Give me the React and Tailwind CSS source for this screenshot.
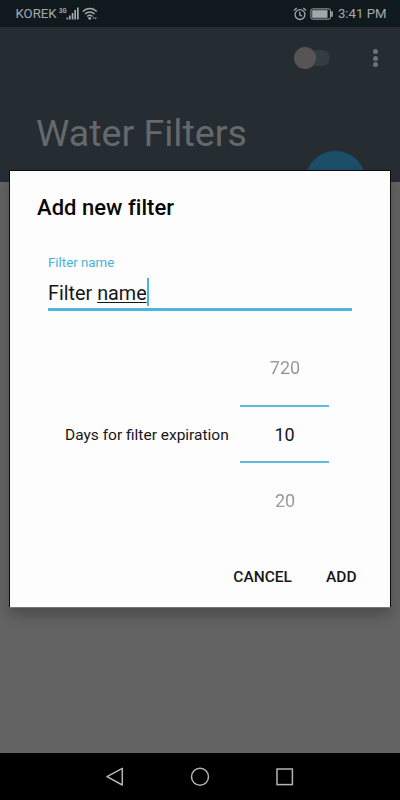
function SignalIcon() {
  return (
    <svg width="26" height="16" viewBox="0 0 26 16" className="ml-0.5 shrink-0" fill="#a3a9ab">
      <text x="0" y="6.6" fontSize="7.5" fontWeight="700" fontFamily="Roboto, sans-serif" textLength="7.5" lengthAdjust="spacingAndGlyphs">
        3G
      </text>
      <rect x="7.5" y="11.5" width="1.7" height="2" />
      <rect x="10" y="9.5" width="1.7" height="4" />
      <rect x="12.7" y="7" width="1.7" height="6.5" />
      <rect x="15.3" y="4" width="1.7" height="9.5" />
      <rect x="18" y="1.5" width="1.7" height="12" />
    </svg>
  );
}

function WifiIcon() {
  return (
    <svg width="16" height="14" viewBox="0 0 16 14" className="shrink-0" fill="none" stroke="#a3a9ab" strokeWidth="1.4">
      <path d="M0.8 4.6C4.8 0.4 10.8 0.4 14.8 4.6" />
      <path d="M3 7.1C5.8 4.3 9.8 4.3 12.6 7.1" />
      <path d="M5.2 9.4C6.8 7.9 8.8 7.9 10.4 9.4" />
      <circle cx="7.7" cy="11.4" r="1.4" fill="#a3a9ab" stroke="none" />
      <path d="M10.4 11.6l1.1 -1.9l1.1 1.9zM12.6 10.6l1.1 1.9l1.1 -1.9z" fill="#a3a9ab" stroke="none" />
    </svg>
  );
}

function AlarmIcon() {
  return (
    <svg width="14" height="14" viewBox="0 0 14 14" className="shrink-0" fill="none" stroke="#a3a9ab" strokeWidth="1.3">
      <circle cx="7" cy="7.6" r="4.9" />
      <path d="M6.8 4.8v3l2.2 1.5" />
      <path d="M0.9 3.5L3.7 1.1M13.1 3.5L10.3 1.1" />
    </svg>
  );
}

function BatteryIcon() {
  return (
    <svg width="24" height="12" viewBox="0 0 24 12" className="shrink-0">
      <rect x="0.9" y="0.9" width="19.6" height="10.2" rx="1.6" fill="none" stroke="#a3a9ab" />
      <rect x="2.2" y="2.2" width="15.3" height="7.6" fill="#a3a9ab" />
      <rect x="21.2" y="3.2" width="1.6" height="5.6" rx="0.5" fill="#a3a9ab" />
    </svg>
  );
}

function StatusBar() {
  return (
    <div className="flex h-[27px] items-center justify-between bg-[#10191d] pt-px pr-[13.5px] pl-[15.5px] text-[13.2px] leading-none text-[#a3a9ab]">
      <div className="flex items-center">
        <span className="w-[41px] whitespace-nowrap">KOREK</span>
        <SignalIcon />
        <div className="-ml-[2.5px]"><WifiIcon /></div>
      </div>
      <div className="flex items-center gap-[3.5px]">
        <AlarmIcon />
        <BatteryIcon />
        <span className="w-[49px] text-right whitespace-nowrap">3:41 PM</span>
      </div>
    </div>
  );
}

function AppBar() {
  return (
    <div className="relative h-[155px] bg-[#252d32]">
      <div className="flex items-center justify-end pt-[19px] pr-[22px]">
        <div className="flex h-6 w-9 items-center">
          <div className="z-10 h-[22px] w-[22px] shrink-0 rounded-full bg-[#585455]" />
          <div className="-ml-3 h-4 w-[26px] shrink-0 rounded-full bg-[#333c41]" />
        </div>
        <div className="ml-[43px] flex flex-col items-center gap-[1.5px]">
          <span className="h-[5px] w-[5px] rounded-full bg-[#6d7275]" />
          <span className="h-[5px] w-[5px] rounded-full bg-[#6d7275]" />
          <span className="h-[5px] w-[5px] rounded-full bg-[#6d7275]" />
        </div>
      </div>
      <h1 className="mt-[43px] ml-9 text-[37.6px] leading-10 whitespace-nowrap text-[#66696b]">Water Filters</h1>
      {/* Floating add button, straddles the bar's lower edge */}
      <div className="absolute top-[124px] left-[305px] h-[61px] w-[61px] rounded-full bg-[#1c4d69]" />
    </div>
  );
}

function NumberPicker() {
  return (
    <div className="flex w-[90px] flex-col items-center text-[18px] leading-6">
      <span className="bg-linear-to-b from-[#a3a3a3] to-[#858585] bg-clip-text text-transparent">720</span>
      <div className="mt-[25px] flex h-[58px] w-[89px] items-center justify-center self-start border-y-2 border-[#5dbbdd] pt-0.5 text-[#161616]">
        10
      </div>
      <span className="mt-[26px] bg-linear-to-b from-[#858585] to-[#a8a8a8] bg-clip-text text-transparent">20</span>
    </div>
  );
}

function AddFilterDialog() {
  return (
    <div className="absolute top-[171px] left-[10px] h-[436px] w-[380px] bg-[#fdfdfd] shadow-[0_-1px_0_0_#0c0c0c,-1px_0_0_0_#0c0c0c,1px_0_0_0_#0c0c0c,0_1px_0_0_#777,0_8px_14px_0_rgba(0,0,0,0.25)]">
      <h2 className="pt-6 pl-[27px] text-[22px] leading-[26px] font-medium tracking-[0.04px] text-[#080808]">Add new filter</h2>

      <div className="mt-8 ml-[38px] w-[304px]">
        <label className="block text-[13.3px] leading-5 text-[#48b4d8]">Filter name</label>
        <div className="mt-[3px] flex h-[35px] items-center border-b-[3px] border-[#4bb6da] text-[19.8px] leading-7 text-[#161616]">
          <span className="pt-[3px] whitespace-pre">Filter </span>
          <span className="pt-[3px] underline decoration-1 underline-offset-2">name</span>
          <span className="h-7 w-[2px] bg-[#4bb6da]" />
        </div>
      </div>

      <div className="mt-[45px] ml-[55px] flex items-center">
        <span className="w-[175px] pt-[2px] text-[15.5px] whitespace-nowrap text-[#161616]">Days for filter expiration</span>
        <NumberPicker />
      </div>

      <div className="mt-[52px] flex justify-end gap-[34px] pr-[33.5px] text-[15.5px] leading-6 font-medium text-[#161616]">
        <button>CANCEL</button>
        <button>ADD</button>
      </div>
    </div>
  );
}

function NavBar() {
  return (
    <div className="flex h-[47px] items-center justify-center bg-black">
      <svg width="188" height="20" viewBox="0 0 188 20" fill="none" stroke="#b4b4b4" strokeWidth="1.5">
        <path d="M16.3 1.3V18L1 9.6Z" strokeLinejoin="round" />
        <circle cx="94" cy="9.7" r="8.5" />
        <rect x="171" y="2" width="15.4" height="15.6" />
      </svg>
    </div>
  );
}

export default function App() {
  return (
    <div className="relative flex h-[800px] w-[400px] flex-col overflow-hidden bg-[#636363] font-[Roboto,sans-serif]">
      <StatusBar />
      <AppBar />
      <div className="flex-1" />
      <NavBar />
      <AddFilterDialog />
    </div>
  );
}
